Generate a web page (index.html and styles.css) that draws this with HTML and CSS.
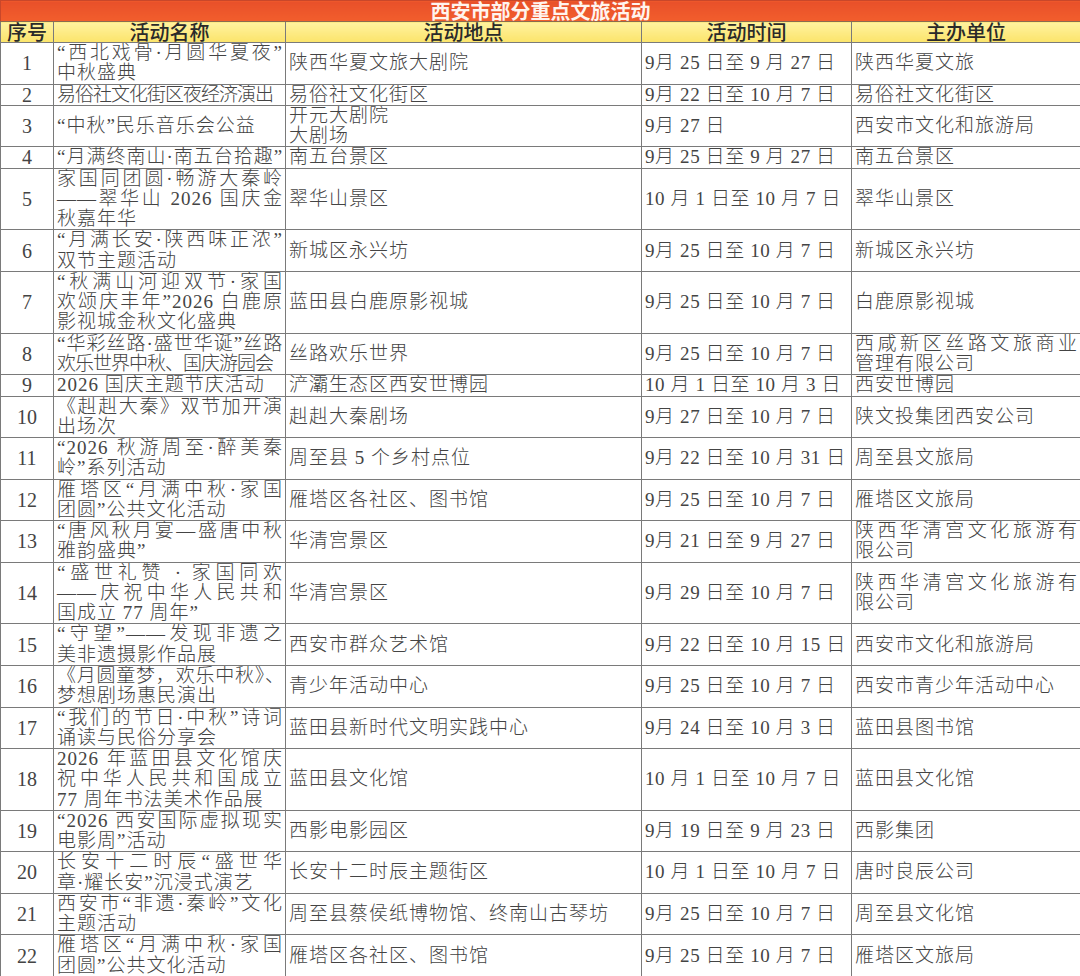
FILE: index.html
```html
<!DOCTYPE html>
<html lang="zh-CN">
<head>
<meta charset="utf-8">
<title>西安市部分重点文旅活动</title>
<link rel="stylesheet" href="styles.css">
</head>
<body>
<table class="sheet">
  <colgroup>
    <col class="c-no"><col class="c-name"><col class="c-place"><col class="c-time"><col class="c-org">
  </colgroup>
  <thead>
    <tr class="title-row"><th colspan="5">西安市部分重点文旅活动</th></tr>
    <tr class="head-row"><th>序号</th><th>活动名称</th><th>活动地点</th><th>活动时间</th><th>主办单位</th></tr>
  </thead>
  <tbody>
    <tr><td class="no">1</td><td><span class="j">“西北戏骨·月圆华夏夜”</span>中秋盛典</td><td>陕西华夏文旅大剧院</td><td class="t">9月 25 日至 9 月 27 日</td><td>陕西华夏文旅</td></tr>
    <tr><td class="no">2</td><td class="n">易俗社文化街区夜经济演出</td><td>易俗社文化街区</td><td class="t">9月 22 日至 10 月 7 日</td><td>易俗社文化街区</td></tr>
    <tr><td class="no">3</td><td>“中秋”民乐音乐会公益</td><td>开元大剧院<br>大剧场</td><td class="t">9月 27 日</td><td>西安市文化和旅游局</td></tr>
    <tr><td class="no">4</td><td>“月满终南山·南五台拾趣”</td><td>南五台景区</td><td class="t">9月 25 日至 9 月 27 日</td><td>南五台景区</td></tr>
    <tr><td class="no">5</td><td><span class="j">家国同团圆·畅游大秦岭</span><span class="j">——翠华山 2026 国庆金</span>秋嘉年华</td><td>翠华山景区</td><td class="t">10 月 1 日至 10 月 7 日</td><td>翠华山景区</td></tr>
    <tr><td class="no">6</td><td><span class="j">“月满长安·陕西味正浓”</span>双节主题活动</td><td>新城区永兴坊</td><td class="t">9月 25 日至 10 月 7 日</td><td>新城区永兴坊</td></tr>
    <tr><td class="no">7</td><td><span class="j">“秋满山河迎双节·家国</span><span class="j">欢颂庆丰年”2026 白鹿原</span>影视城金秋文化盛典</td><td>蓝田县白鹿原影视城</td><td class="t">9月 25 日至 10 月 7 日</td><td>白鹿原影视城</td></tr>
    <tr><td class="no">8</td><td><span class="j">“华彩丝路·盛世华诞”丝路</span><span class="n">欢乐世界中秋、国庆游园会</span></td><td>丝路欢乐世界</td><td class="t">9月 25 日至 10 月 7 日</td><td><span class="j">西咸新区丝路文旅商业</span>管理有限公司</td></tr>
    <tr><td class="no">9</td><td>2026 国庆主题节庆活动</td><td>浐灞生态区西安世博园</td><td class="t">10 月 1 日至 10 月 3 日</td><td>西安世博园</td></tr>
    <tr><td class="no">10</td><td><span class="j">《赳赳大秦》双节加开演</span>出场次</td><td>赳赳大秦剧场</td><td class="t">9月 27 日至 10 月 7 日</td><td>陕文投集团西安公司</td></tr>
    <tr><td class="no">11</td><td><span class="j">“2026 秋游周至·醉美秦</span>岭”系列活动</td><td>周至县 5 个乡村点位</td><td class="t">9月 22 日至 10 月 31 日</td><td>周至县文旅局</td></tr>
    <tr><td class="no">12</td><td><span class="j">雁塔区“月满中秋·家国</span>团圆”公共文化活动</td><td>雁塔区各社区、图书馆</td><td class="t">9月 25 日至 10 月 7 日</td><td>雁塔区文旅局</td></tr>
    <tr><td class="no">13</td><td><span class="j">“唐风秋月宴—盛唐中秋</span>雅韵盛典”</td><td>华清宫景区</td><td class="t">9月 21 日至 9 月 27 日</td><td><span class="j">陕西华清宫文化旅游有</span>限公司</td></tr>
    <tr><td class="no">14</td><td><span class="j">“盛世礼赞 · 家国同欢</span><span class="j">——庆祝中华人民共和</span>国成立 77 周年”</td><td>华清宫景区</td><td class="t">9月 29 日至 10 月 7 日</td><td><span class="j">陕西华清宫文化旅游有</span>限公司</td></tr>
    <tr><td class="no">15</td><td><span class="j">“守望”——发现非遗之</span>美非遗摄影作品展</td><td>西安市群众艺术馆</td><td class="t">9月 22 日至 10 月 15 日</td><td>西安市文化和旅游局</td></tr>
    <tr><td class="no">16</td><td><span class="j n">《月圆童梦，欢乐中秋》、</span>梦想剧场惠民演出</td><td>青少年活动中心</td><td class="t">9月 25 日至 10 月 7 日</td><td>西安市青少年活动中心</td></tr>
    <tr><td class="no">17</td><td><span class="j">“我们的节日·中秋”诗词</span>诵读与民俗分享会</td><td>蓝田县新时代文明实践中心</td><td class="t">9月 24 日至 10 月 3 日</td><td>蓝田县图书馆</td></tr>
    <tr><td class="no">18</td><td><span class="j">2026 年蓝田县文化馆庆</span><span class="j">祝中华人民共和国成立</span>77 周年书法美术作品展</td><td>蓝田县文化馆</td><td class="t">10 月 1 日至 10 月 7 日</td><td>蓝田县文化馆</td></tr>
    <tr><td class="no">19</td><td><span class="j">“2026 西安国际虚拟现实</span>电影周”活动</td><td>西影电影园区</td><td class="t">9月 19 日至 9 月 23 日</td><td>西影集团</td></tr>
    <tr><td class="no">20</td><td><span class="j">长安十二时辰“盛世华</span>章·耀长安”沉浸式演艺</td><td>长安十二时辰主题街区</td><td class="t">10 月 1 日至 10 月 7 日</td><td>唐时良辰公司</td></tr>
    <tr><td class="no">21</td><td><span class="j">西安市“非遗·秦岭”文化</span>主题活动</td><td>周至县蔡侯纸博物馆、终南山古琴坊</td><td class="t">9月 25 日至 10 月 7 日</td><td>周至县文化馆</td></tr>
    <tr><td class="no">22</td><td><span class="j">雁塔区“月满中秋·家国</span>团圆”公共文化活动</td><td>雁塔区各社区、图书馆</td><td class="t">9月 25 日至 10 月 7 日</td><td>雁塔区文旅局</td></tr>
  </tbody>
</table>
</body>
</html>
```
FILE: styles.css
```css
html, body {
  margin: 0;
  padding: 0;
  background: #ffffff;
}

.sheet {
  width: 1080px;
  table-layout: fixed;
  border-collapse: collapse;
  font-family: "Liberation Serif", "Noto Sans CJK SC", serif;
  font-size: 19px;
  font-weight: 300;
  color: #444444;
}

.c-no { width: 53px; }
.c-name { width: 232px; }
.c-place { width: 356px; }
.c-time { width: 210px; }
.c-org { width: 229px; }

.title-row th {
  height: 20px;
  padding: 0;
  background: linear-gradient(#e8502a, #f25e2c);
  color: #fff4ee;
  font-family: "Noto Sans CJK SC", sans-serif;
  font-weight: 700;
  font-size: 20px;
  line-height: 20px;
  text-align: center;
  border: 1px solid #c9472a;
  border-bottom: 1px solid #8a6a50;
}

.head-row th {
  height: 20px;
  padding: 0;
  background: linear-gradient(#fff2a0, #fbe46a);
  color: #2a2a2a;
  font-family: "Noto Sans CJK SC", sans-serif;
  font-weight: 500;
  font-size: 20px;
  line-height: 20px;
  text-align: center;
  border: 1px solid #7a7a7a;
}

.sheet td {
  padding: 0 2px 0 3px;
  border: 1px solid #7a7a7a;
  line-height: 20.27px;
  letter-spacing: 1px;
  vertical-align: middle;
  white-space: nowrap;
  overflow: hidden;
  text-align: left;
}

.sheet td.no {
  text-align: center;
  padding: 0;
  font-size: 20px;
  letter-spacing: 0;
}

.sheet td.t {
  letter-spacing: 0.6px;
}

.j {
  display: block;
  text-align: justify;
  text-align-last: justify;
}

.sheet .n {
  letter-spacing: -1px;
}
```
